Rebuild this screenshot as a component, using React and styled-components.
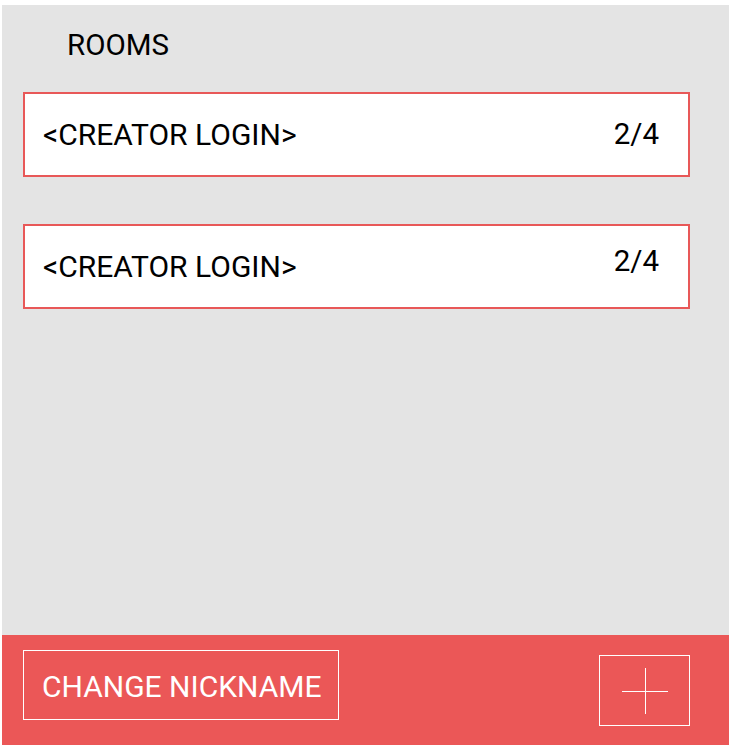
import * as React from "react"
import styled, { createGlobalStyle } from "styled-components"

const rooms = [
  { creator: "<CREATOR LOGIN>", players: "2/4", raised: false },
  { creator: "<CREATOR LOGIN>", players: "2/4", raised: true },
]

const GlobalStyle = createGlobalStyle`
  html, body {
    margin: 0;
    padding: 0;
    background: #fff;
  }
  body {
    font-family: Roboto, "Liberation Sans", sans-serif;
  }
`

// lobby screen
const App = () => {
  return (
    <Page>
      <GlobalStyle />
      <Panel>
        <Content>
          <Title>ROOMS</Title>
          <RoomList>
            {rooms.map((room, index) => (
              <RoomCard key={index}>
                <Creator>{room.creator}</Creator>
                <Players raised={room.raised ? "true" : undefined}>
                  {room.players}
                </Players>
              </RoomCard>
            ))}
          </RoomList>
        </Content>
        <Footer>
          <OutlineButton>CHANGE NICKNAME</OutlineButton>
          <AddButton aria-label="add room">
            <svg width="46" height="46" viewBox="0 0 46 46">
              <line x1="0" y1="23.5" x2="46" y2="23.5" stroke="#fff" strokeWidth="1" />
              <line x1="23.5" y1="0" x2="23.5" y2="46" stroke="#fff" strokeWidth="1" />
            </svg>
          </AddButton>
        </Footer>
      </Panel>
    </Page>
  )
}

export default App

const Page = styled.div`
  padding: 5px 4px 3px 2px;
`

const Panel = styled.div`
  height: 740px;
  display: flex;
  flex-direction: column;
  background: #e4e4e4;
`

const Content = styled.div`
  flex: 1;
  padding: 0 39px 0 21px;
`

const Title = styled.h1`
  margin: 0;
  padding: 24px 0 0 44px;
  height: 87px;
  box-sizing: border-box;
  font-size: 29.5px;
  font-weight: 400;
  line-height: 32px;
  color: #000;
`

const RoomList = styled.div`
  display: flex;
  flex-direction: column;
  gap: 47px;
`

const RoomCard = styled.div`
  height: 85px;
  box-sizing: border-box;
  display: flex;
  align-items: center;
  justify-content: space-between;
  padding: 0 29px 0 18px;
  background: #fff;
  border: 2px solid #e85858;
`

const Creator = styled.span`
  font-size: 30px;
  color: #000;
  margin-top: 0;
`

const Players = styled.span`
  font-size: 29.5px;
  color: #000;
  margin-bottom: ${(p) => (p.raised ? "12px" : "2px")};
`

const Footer = styled.div`
  height: 110px;
  flex-shrink: 0;
  display: flex;
  align-items: flex-start;
  justify-content: space-between;
  padding: 15px 39px 0 21px;
  box-sizing: border-box;
  background: #eb5757;
`

const OutlineButton = styled.button`
  width: 316px;
  height: 70px;
  box-sizing: border-box;
  background: transparent;
  border: 1px solid #fff;
  color: #fff;
  font-family: Roboto, "Liberation Sans", sans-serif;
  font-size: 30px;
  text-align: left;
  padding: 2px 0 0 18px;
  cursor: pointer;
`

const AddButton = styled.button`
  width: 91px;
  height: 71px;
  margin-top: 5px;
  box-sizing: border-box;
  background: transparent;
  border: 1px solid #fff;
  display: flex;
  align-items: center;
  justify-content: center;
  padding: 0;
  cursor: pointer;
`
